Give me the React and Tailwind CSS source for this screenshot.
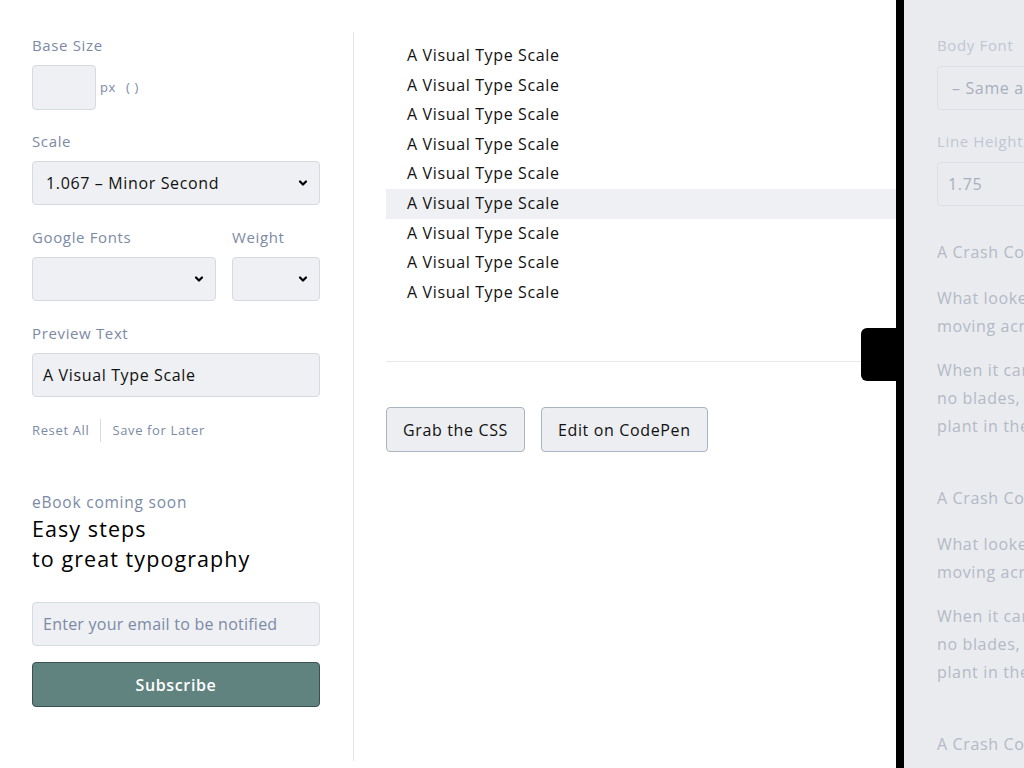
import React from 'react';

const FONT = { fontFamily: '"Open Sans", "Noto Sans", sans-serif', letterSpacing: '0.04em' };

const Chevron = () => (
    <svg className="h-3 w-3 text-black" viewBox="0 0 12 12" fill="none" stroke="currentColor" strokeWidth={2.2} strokeLinecap="round" strokeLinejoin="round">
        <path d="M3 4.5l3 3 3-3" />
    </svg>
);

const Select = ({ value, className }) => (
    <div className={`flex h-[44px] items-center justify-between rounded border border-[#d5d9e0] bg-[#eff0f3] pl-[13px] pr-[10px] text-[16px] text-[#111] ${className}`}>
        <span>{value}</span>
        <Chevron />
    </div>
);

const Label = ({ children, className = '' }) => (
    <div className={`text-[15px] leading-[20px] text-[#7c8aa5] ${className}`}>{children}</div>
);

const ROWS = Array.from({ length: 9 });

const Drawer = () => (
    <div className="absolute right-0 top-0 h-full w-[128px] border-l-8 border-black bg-[#eaebef]">
        <div className="absolute left-[-43px] top-[328px] h-[53px] w-[36px] rounded-l-md bg-black" />
        <div className="overflow-hidden pl-[33px] text-[#b3b9c6] whitespace-nowrap">
            <div className="pt-[35px] text-[15px] leading-[20px] text-[#c0c6d3]">Body Font</div>
            <div className="mt-[11px] flex h-[44px] w-[200px] items-center rounded border border-[#dcdfe5] pl-[14px] text-[16px] text-[#a8afbd]">– Same as Headings</div>
            <div className="mt-[21px] text-[15px] leading-[20px] text-[#c0c6d3]">Line Height</div>
            <div className="mt-[11px] flex h-[44px] w-[200px] items-center rounded border border-[#dcdfe5] pl-[10px] text-[16px] text-[#a8afbd]">1.75</div>
            <div className="mt-[32px] text-[16px] leading-[28px]">A Crash Course</div>
            <div className="mt-[18px] text-[16px] leading-[28px]">
                <div>What looked like</div>
                <div>moving across the</div>
            </div>
            <div className="mt-[16px] text-[16px] leading-[28px]">
                <div>When it came</div>
                <div>no blades, but</div>
                <div>plant in the sand</div>
            </div>
            <div className="mt-[44px] text-[16px] leading-[28px]">A Crash Course</div>
            <div className="mt-[18px] text-[16px] leading-[28px]">
                <div>What looked like</div>
                <div>moving across the</div>
            </div>
            <div className="mt-[16px] text-[16px] leading-[28px]">
                <div>When it came</div>
                <div>no blades, but</div>
                <div>plant in the sand</div>
            </div>
            <div className="mt-[44px] text-[16px] leading-[28px]">A Crash Course</div>
        </div>
    </div>
);

const App = () => {
    return (
        <div className="relative h-[768px] w-[1024px] overflow-hidden bg-white" style={FONT}>
            <div className="flex pt-[32px]">
                <aside className="h-[729px] w-[354px] shrink-0 border-r border-[#e3e5e9] pl-[32px] pr-[33px]">
                    <Label className="mt-[3px]">Base Size</Label>
                    <div className="mt-[10px] flex items-center">
                        <div className="h-[45px] w-[64px] rounded border border-[#d5d9e0] bg-[#eff0f3]" />
                        <span className="ml-[4px] text-[13px] text-[#7c8aa5]">px</span>
                        <span className="ml-[10px] text-[13px] text-[#7c8aa5]">( )</span>
                    </div>
                    <Label className="mt-[21px]">Scale</Label>
                    <Select className="mt-[10px]" value="1.067 – Minor Second" />
                    <div className="mt-[22px] flex gap-[16px]">
                        <div className="w-[184px]">
                            <Label>Google Fonts</Label>
                            <Select className="mt-[10px]" value="" />
                        </div>
                        <div className="flex-1">
                            <Label>Weight</Label>
                            <Select className="mt-[10px]" value="" />
                        </div>
                    </div>
                    <Label className="mt-[22px]">Preview Text</Label>
                    <div className="mt-[10px] flex h-[44px] items-center rounded border border-[#d5d9e0] bg-[#eff0f3] pl-[10px] text-[16px] text-[#111]">A Visual Type Scale</div>
                    <div className="mt-[22px] flex items-center text-[13px] text-[#7c8aa5]">
                        <span>Reset All</span>
                        <span className="mx-[11px] h-[23px] w-px bg-[#d5d9e0]" />
                        <span>Save for Later</span>
                    </div>
                    <div className="mt-[50px] text-[15.5px] font-medium leading-[20px] tracking-[0.05em] text-[#7c8aa5]">eBook coming soon</div>
                    <div className="mt-[2px] text-[21.5px] leading-[30px] tracking-[0.05em] text-black">
                        <div>Easy steps</div>
                        <div>to great typography</div>
                    </div>
                    <input
                        className="mt-[28px] h-[44px] w-full rounded border border-[#d5d9e0] bg-[#eff0f3] px-[10px] text-[16px] text-[#111] outline-none placeholder:text-[#7c8aa5]"
                        placeholder="Enter your email to be notified"
                        style={{ ...FONT, letterSpacing: '0.015em' }}
                    />
                    <button className="mt-[16px] h-[45px] w-full rounded border border-[#3c5052] bg-[#60837f] text-[16px] font-semibold text-white" style={FONT}>
                        Subscribe
                    </button>
                </aside>
                <main className="flex-1 pl-[32px]">
                    <div className="pt-[9px]">
                        {ROWS.map((_, i) => (
                            <div key={i} className={`h-[29.6px] pl-[21px] text-[16px] leading-[29.6px] text-[#111] ${i === 5 ? 'bg-[#eff0f3]' : ''}`}>
                                A Visual Type Scale
                            </div>
                        ))}
                    </div>
                    <div className="mt-[54px] h-px bg-[#e5e7eb]" />
                    <div className="mt-[45px] flex gap-[16px]">
                        <button className="h-[45px] rounded border border-[#aab3c2] bg-[#eceef1] px-[16px] text-[16px] text-[#111]" style={FONT}>Grab the CSS</button>
                        <button className="h-[45px] rounded border border-[#aab3c2] bg-[#eceef1] px-[16px] text-[16px] text-[#111]" style={FONT}>Edit on CodePen</button>
                    </div>
                </main>
            </div>
            <Drawer />
        </div>
    );
};

export default App;
